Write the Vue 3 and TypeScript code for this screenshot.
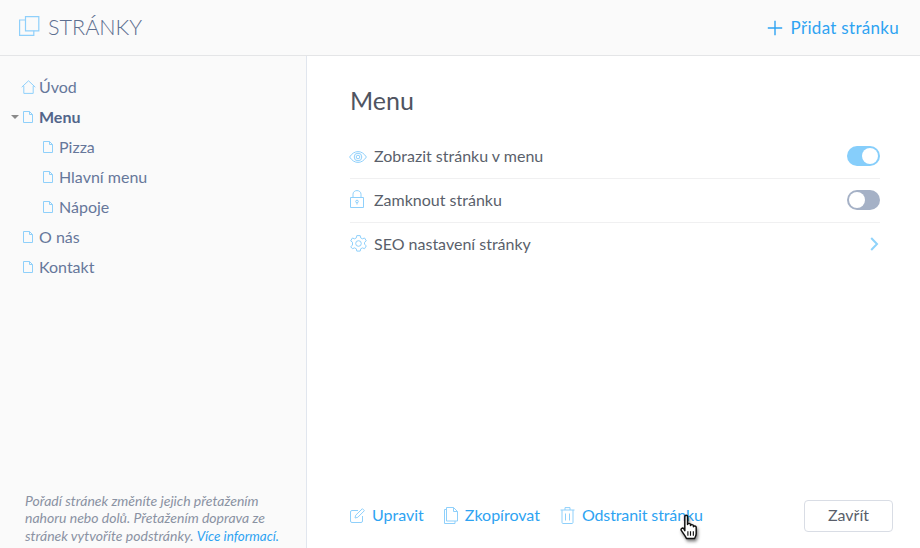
<script setup lang="ts">
interface Page { label: string; level: number; icon: 'home' | 'page'; active?: boolean; open?: boolean }
const pages: Page[] = [
  { label: 'Úvod', level: 0, icon: 'home' },
  { label: 'Menu', level: 0, icon: 'page', active: true, open: true },
  { label: 'Pizza', level: 1, icon: 'page' },
  { label: 'Hlavní menu', level: 1, icon: 'page' },
  { label: 'Nápoje', level: 1, icon: 'page' },
  { label: 'O nás', level: 0, icon: 'page' },
  { label: 'Kontakt', level: 0, icon: 'page' },
]
</script>

<template>
  <div class="app">
    <header class="header">
      <div class="brand">
        <svg class="brand-icon" width="21" height="21" viewBox="0 0 21 21" fill="none" stroke="#8fd0fb" stroke-width="1.2">
          <path d="M6.500 .6h13.300v14.200H6.500z" />
          <path d="M6.500 4H.6v15.400h14.200v-4.600" />
        </svg>
        <span class="brand-title">STRÁNKY</span>
      </div>
      <a class="add">
        <svg width="16" height="16" viewBox="0 0 16 16" stroke="#2ea3f2" stroke-width="1.4" fill="none">
          <path d="M8 .8v14.400M.8 8h14.400" />
        </svg>
        <span>Přidat stránku</span>
      </a>
    </header>

    <div class="body">
      <aside class="side">
        <ul class="tree">
          <li v-for="p in pages" :key="p.label" class="node" :class="{ child: p.level === 1, active: p.active }">
            <span v-if="p.open" class="caret"></span>
            <svg v-if="p.icon === 'home'" class="home" width="15" height="14" viewBox="0 0 15 14" fill="none" stroke="#8fd0fb" stroke-width="1">
              <path d="M.7 7.200 7.500.8l6.800 6.400M2.800 6v7.400h9.400V6" />
            </svg>
            <svg v-else class="page" width="10" height="12" viewBox="0 0 10 12" fill="none" stroke="#8fd0fb" stroke-width="1">
              <path d="M.5.5h6l3 3v8h-9zM6.500.5v3h3" />
            </svg>
            <span class="label">{{ p.label }}</span>
          </li>
        </ul>
        <p class="help">
          Pořadí stránek změníte jejich přetažením nahoru nebo dolů. Přetažením doprava ze stránek vytvoříte podstránky.
          <a>Více informací.</a>
        </p>
      </aside>

      <main class="main">
        <h1 class="title">Menu</h1>
        <div class="rows">
          <div class="row">
            <svg class="row-icon eye" width="18" height="12" viewBox="0 0 18 12" fill="none" stroke="#8fd0fb" stroke-width="1">
              <path d="M.6 6C3 2.400 5.800.6 9 .6s6 1.800 8.400 5.400c-2.400 3.600-5.200 5.400-8.400 5.400S3 9.600.6 6z" />
              <circle cx="9" cy="6" r="3.800" />
              <circle cx="9" cy="6" r="1.800" />
            </svg>
            <span class="row-label">Zobrazit stránku v menu</span>
            <span class="toggle on"><i></i></span>
          </div>
          <div class="row">
            <svg class="row-icon lock" width="14" height="18" viewBox="0 0 14 18" fill="none" stroke="#8fd0fb" stroke-width="1">
              <path d="M.5 7.500h13v10H.5zM3 7.500V4.200C3 2 4.800.6 7 .6s4 1.400 4 3.600v3.300" />
              <circle cx="7" cy="11.500" r="1.300" />
              <path d="M7 12.800v1.800" />
            </svg>
            <span class="row-label">Zamknout stránku</span>
            <span class="toggle"><i></i></span>
          </div>
          <div class="row last">
            <svg class="row-icon gear" width="17" height="17" viewBox="0 0 17 17" fill="none" stroke="#8fd0fb" stroke-width="1">
              <path d="M6.800.6h3.400l.5 2.300 1.700.9 2.200-.8 1.700 2.900-1.800 1.500v1.900l1.800 1.500-1.700 2.900-2.200-.8-1.700.9-.5 2.300H6.800l-.5-2.300-1.700-.9-2.200.8L.7 11.700l1.800-1.500V7.300L.7 5.900l1.700-2.900 2.200.8 1.700-.9z" />
              <circle cx="8.500" cy="8.500" r="2.800" />
            </svg>
            <span class="row-label">SEO nastavení stránky</span>
            <svg class="chev" width="9" height="14" viewBox="0 0 9 14" fill="none" stroke="#8fd3fb" stroke-width="2">
              <path d="M1.200 1 7 7l-5.800 6" />
            </svg>
          </div>
        </div>

        <footer class="actions">
          <a class="action a1">
            <svg width="15" height="15" viewBox="0 0 15 15" fill="none" stroke="#8fd0fb" stroke-width="1">
              <path d="M12.500 8v5a1.500 1.500 0 0 1-1.500 1.500H2A1.500 1.500 0 0 1 .5 13V4A1.500 1.500 0 0 1 2 2.500h6" />
              <path d="M5 10l.7-2.800L12.400.7l2 2-6.600 6.600z" />
            </svg>
            <span>Upravit</span>
          </a>
          <a class="action a2">
            <svg width="14" height="17" viewBox="0 0 14 17" fill="none" stroke="#8fd0fb" stroke-width="1">
              <path d="M2.500.5h7l4 4v9.500h-11zM9.500.5v4h4M2.500 2.500H.5v14h10.500V14" />
            </svg>
            <span>Zkopírovat</span>
          </a>
          <a class="action a3">
            <svg width="15" height="17" viewBox="0 0 15 17" fill="none" stroke="#8fd0fb" stroke-width="1">
              <path d="M.5 3h14M5 3V.6h5V3M2 3v12.500c0 .6.400 1 1 1h9c.6 0 1-.4 1-1V3M5.500 6.500v7M9.500 6.500v7" />
            </svg>
            <span>Odstranit stránku</span>
          </a>
          <button class="close">Zavřít</button>
        </footer>
        <svg class="cursor" width="25" height="31" viewBox="0 0 22 27">
          <path class="hand" d="M6 2c0-1.400 2.400-1.400 2.400 0v7c.3-1.200 2.400-1.200 2.600 0v1c.3-1.100 2.400-1.100 2.600.2v.8c.4-1 2.400-.8 2.400.6v5.400c0 2.400-1 3-1.400 4.500H7.500c-.8-2-2-3.500-4.500-7-1-1.500.8-3 2.200-1.600L6 14.500z" />
          <path d="M8.700 15v4M11 15v4M13.500 15v4" stroke="#111" stroke-width="1" fill="none" />
        </svg>
      </main>
    </div>
  </div>
</template>

<style>
html, body { margin: 0; background: #fff; }
</style>

<style scoped>
.app {
  width: 920px;
  height: 548px;
  display: flex;
  flex-direction: column;
  overflow: hidden;
  font-family: Lato, "Open Sans", sans-serif;
  font-size: 16px;
  color: #4f5461;
  background: #fff;
}
.header {
  height: 55px;
  flex: none;
  background: #fafafa;
  border-bottom: 1px solid #e4e5e7;
  display: flex;
  align-items: center;
  justify-content: space-between;
  padding: 0 21px 0 19px;
}
.brand { display: flex; align-items: center; gap: 8px; }
.brand-icon { margin-top: -3px; }
.brand-title { font-size: 21.6px; font-weight: 300; color: #5d6f90; margin-top: -2px; }
.add { display: flex; align-items: center; gap: 8px; color: #2ea3f2; font-size: 17px; letter-spacing: .3px; }
.body { flex: 1; display: flex; min-height: 0; }
.side {
  width: 306px;
  flex: none;
  background: #fafafa;
  border-right: 1px solid #e1e6ee;
  display: flex;
  flex-direction: column;
  justify-content: space-between;
}
.tree { list-style: none; margin: 15px 0 0; padding: 0; }
.node {
  height: 30px;
  display: flex;
  align-items: center;
  padding-left: 23px;
  position: relative;
  color: #66779a;
}
.node.child { padding-left: 43px; }
.node.active { font-weight: 700; color: #52658a; }
.label { margin-left: 6px; }
.home { margin-left: -2px; margin-right: -3px; margin-top: 1px; }
.page { margin-top: 2px; }
.caret {
  position: absolute;
  left: 11px;
  top: 14px;
  border: 4px solid transparent;
  border-top-color: #8a8a8a;
  border-bottom: 0;
}
.help {
  margin: 0 0 3px;
  padding: 0 10px 0 25px;
  font-size: 14px;
  font-style: italic;
  line-height: 17.500px;
  color: #8a92a3;
}
.help a { color: #2ea3f2; font-size: 13.400px; }
.main {
  flex: 1;
  position: relative;
  padding: 0 27px 0 43px;
  display: flex;
  flex-direction: column;
}
.title { margin: 28px 0 19px; font-size: 25px; line-height: 32px; font-weight: 400; color: #4f5461; }
.rows { margin-right: 13px; }
.row {
  height: 44px;
  box-sizing: border-box;
  display: flex;
  align-items: center;
  border-bottom: 1px solid #f0f0f1;
}
.row.last { border-bottom: 0; }
.row-icon { flex: none; }
.eye { margin: 0 7px 0 -1px; }
.lock { margin: -3px 10px 0 0; }
.gear { margin: -3px 7px 0 0; }
.row-label { flex: 1; color: #5a5f6b; padding-bottom: 4px; margin-top: 1px; }
.chev { margin: -2px 1px 0 0; }
.toggle {
  width: 33px;
  height: 20px;
  margin-top: -1px;
  border-radius: 10px;
  background: #a5b1c6;
  position: relative;
  display: block;
}
.toggle i {
  position: absolute;
  left: 2px;
  top: 2px;
  width: 16px;
  height: 16px;
  border-radius: 50%;
  background: #fff;
}
.toggle.on { background: #86cefb; }
.toggle.on i { left: 15px; }
.actions {
  margin-top: auto;
  display: flex;
  align-items: center;
  height: 32px;
  margin-bottom: 16px;
  color: #2ea3f2;
}
.action { display: flex; align-items: center; gap: 7px; }
.action span { padding-bottom: 4px; }
.action svg { margin-top: -2px; }
.a1 { margin-right: 20px; }
.a2 { margin-right: 20px; }
.a3 { letter-spacing: -.12px; }
.close {
  margin-left: auto;
  width: 89px;
  height: 32px;
  background: #fff;
  border: 1px solid #d9dde5;
  border-radius: 4px;
  font: inherit;
  color: #5a5f6b;
  padding: 0 0 3px;
}
.cursor { position: absolute; left: 371px; top: 458px; }
.hand {
  fill: #fff;
  stroke: #111;
  stroke-width: 1.300;
  stroke-linejoin: round;
  filter: drop-shadow(1px 2px 1.500px rgba(0, 0, 0, .5));
}
</style>
